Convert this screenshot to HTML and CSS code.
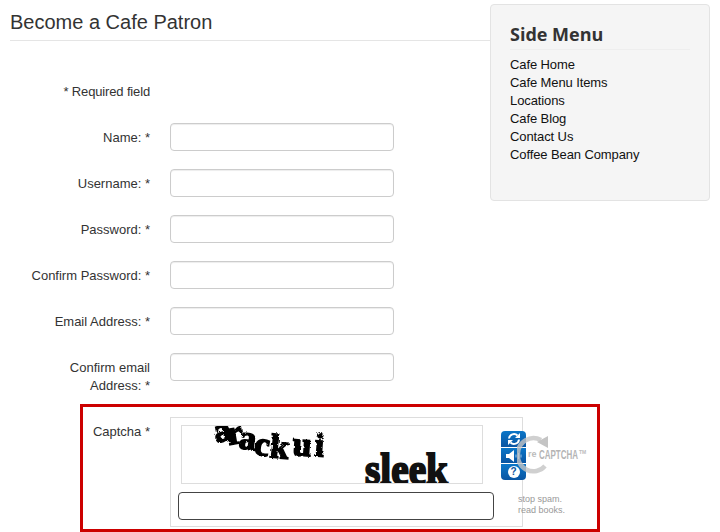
FILE: index.html
```html
<!DOCTYPE html>
<html lang="en">
<head>
    <meta charset="UTF-8">
    <meta name="viewport" content="width=device-width, initial-scale=1.0">
    <title>Become a Cafe Patron</title>
    <link rel="stylesheet" href="styles.css">
</head>
<body>
    <div class="page">
        <main class="main">
            <h1 class="page-title">Become a Cafe Patron</h1>
            <form class="signup">
                <p class="required-note">* Required field</p>
                <div class="row">
                    <label class="row-label">Name: *</label>
                    <input class="field" type="text">
                </div>
                <div class="row">
                    <label class="row-label">Username: *</label>
                    <input class="field" type="text">
                </div>
                <div class="row">
                    <label class="row-label">Password: *</label>
                    <input class="field" type="password">
                </div>
                <div class="row">
                    <label class="row-label">Confirm Password: *</label>
                    <input class="field" type="password">
                </div>
                <div class="row">
                    <label class="row-label">Email Address: *</label>
                    <input class="field" type="text">
                </div>
                <div class="row row-tall">
                    <label class="row-label">Confirm email Address: *</label>
                    <input class="field" type="text">
                </div>
                <div class="captcha-row">
                    <label class="row-label captcha-label">Captcha *</label>
                    <div class="captcha">
                        <div class="captcha-top">
                            <div class="captcha-image">
                                <svg width="300" height="57" viewBox="0 0 300 57">
                                    <defs>
                                        <filter id="rough" x="-5%" y="-5%" width="110%" height="110%">
                                            <feTurbulence type="fractalNoise" baseFrequency="0.3" numOctaves="2" seed="4"/>
                                            <feDisplacementMap in="SourceGraphic" scale="3"/>
                                        </filter>
                                    </defs>
                                    <text class="word-one" filter="url(#rough)" x="34 47 56 71 87 110 132" y="17 19 22 28 31 29 30" rotate="-12 -10 8 10 6 4 4">arackui</text>
                                    <text class="word-two" x="183" y="58" textLength="83" lengthAdjust="spacingAndGlyphs">sleek</text>
                                </svg>
                            </div>
                            <div class="captcha-buttons">
                                <a class="captcha-button">
                                    <svg width="14" height="14" viewBox="0 0 14 14" fill="none" stroke="#fff" stroke-width="2">
                                        <path d="M2 6.500a5 5 0 0 1 8.500-3"/>
                                        <path d="M12 7.500a5 5 0 0 1-8.500 3"/>
                                        <path d="M13 1v5H8z" fill="#fff" stroke="none"/>
                                        <path d="M1 13V8h5z" fill="#fff" stroke="none"/>
                                    </svg>
                                </a>
                                <a class="captcha-button">
                                    <svg width="18" height="14" viewBox="0 0 18 14">
                                        <path d="M1 5h3l5-4v12l-5-4H1z" fill="#fff"/>
                                        <path d="M11 5.500v3M13.500 4v6M16 5.500v3" stroke="#9cc4e6" fill="none"/>
                                    </svg>
                                </a>
                                <a class="captcha-button">
                                    <span class="help-icon">?</span>
                                </a>
                            </div>
                        </div>
                        <div class="captcha-bottom">
                            <input class="captcha-input" type="text">
                            <p class="captcha-tagline">stop spam.<br>read books.</p>
                        </div>
                        <svg class="captcha-logo" width="72" height="48" viewBox="0 0 72 48">
                            <path d="M24 13A15.500 15.500 0 0 0 1 26.500A15.500 15.500 0 0 0 28 39" fill="none" stroke="#c4c4c4" stroke-width="4.500" opacity="0.8"/>
                            <path d="M31 9v12l-11-6z" fill="#c4c4c4"/>
                            <rect x="10" y="21" width="60" height="12" fill="#fff"/>
                            <text class="logo-re" x="11" y="30">re</text>
                            <text class="logo-word" x="22" y="32" textLength="39" lengthAdjust="spacingAndGlyphs">CAPTCHA</text>
                            <text class="logo-tm" x="62" y="27">TM</text>
                        </svg>
                    </div>
                </div>
            </form>
        </main>
        <aside class="side-menu">
            <h2 class="side-title">Side Menu</h2>
            <ul class="side-links">
                <li><a href="#">Cafe Home</a></li>
                <li><a href="#">Cafe Menu Items</a></li>
                <li><a href="#">Locations</a></li>
                <li><a href="#">Cafe Blog</a></li>
                <li><a href="#">Contact Us</a></li>
                <li><a href="#">Coffee Bean Company</a></li>
            </ul>
        </aside>
    </div>
</body>
</html>
```

FILE: styles.css
```css
html, body {
    margin: 0;
    padding: 0;
    height: 532px;
    overflow: hidden;
    background: #fff;
    color: #333;
    font-family: "Liberation Sans", Arial, sans-serif;
    font-size: 13px;
    line-height: 18px;
}

p, h1, h2, ul {
    margin: 0;
    padding: 0;
}

.page {
    display: flex;
    align-items: flex-start;
    padding-left: 10px;
}

.main {
    flex: 0 0 480px;
    width: 480px;
}

.page-title {
    height: 40px;
    font-size: 20px;
    font-weight: normal;
    line-height: 44px;
    border-bottom: 1px solid #e5e5e5;
}

.required-note {
    width: 140px;
    margin: 42px 0 22px;
    letter-spacing: -0.15px;
    text-align: right;
}

.row {
    display: grid;
    grid-template-columns: 140px 224px;
    column-gap: 20px;
    margin-bottom: 18px;
}

.row-tall {
    margin-bottom: 9px;
}

.row-label {
    padding: 6px 0 0 20px;
    text-align: right;
}

.field {
    box-sizing: border-box;
    width: 224px;
    height: 28px;
    margin: 0;
    background: #fff;
    border: 1px solid #ccc;
    border-radius: 4px;
    box-shadow: inset 0 1px 1px rgba(0, 0, 0, 0.075);
}

.captcha-row {
    display: flex;
    gap: 20px;
    box-sizing: border-box;
    width: 520px;
    height: 128px;
    margin-left: 70px;
    padding-top: 10px;
    border: 3px solid #c00;
}

.captcha-label {
    flex: 0 0 67px;
    box-sizing: border-box;
    padding-left: 0;
}

.captcha {
    position: relative;
    box-sizing: border-box;
    width: 353px;
    height: 110px;
    border: 1px solid #ddd;
}

.captcha-top {
    display: flex;
    align-items: flex-start;
    gap: 18px;
    margin: 7px 0 0 10px;
}

.captcha-image {
    flex: none;
    width: 300px;
    height: 57px;
    overflow: hidden;
    border: 1px solid #ddd;
}

.captcha-image svg {
    display: block;
}

.word-one {
    font-family: "Liberation Serif", serif;
    font-size: 34px;
    font-weight: bold;
    fill: #000;
    stroke: #000;
    stroke-width: 1.6px;
}

.word-two {
    font-family: "Liberation Serif", serif;
    font-size: 44px;
    font-weight: bold;
    fill: #111;
    stroke: #111;
    stroke-width: 2px;
}

.captcha-buttons {
    flex: none;
    display: flex;
    flex-direction: column;
    gap: 1px;
    width: 25px;
    height: 49px;
    margin-top: 6px;
    overflow: hidden;
    border-radius: 4px;
}

.captcha-button {
    flex: 1;
    display: flex;
    align-items: center;
    justify-content: center;
    background: linear-gradient(#0b76c8, #0a55a2);
}

.help-icon {
    width: 12px;
    height: 12px;
    border-radius: 50%;
    background: #fff;
    color: #0a559f;
    font-size: 10px;
    font-weight: bold;
    line-height: 12px;
    text-align: center;
}

.captcha-bottom {
    display: flex;
    gap: 24px;
    margin: 8px 0 0 7px;
}

.captcha-input {
    flex: none;
    box-sizing: border-box;
    width: 316px;
    height: 28px;
    margin: 0;
    background: #fff;
    border: 1px solid #444;
    border-radius: 4px;
}

.captcha-tagline {
    flex: none;
    margin-top: 2px;
    color: #999;
    font-size: 9px;
    line-height: 11px;
    white-space: nowrap;
}

.captcha-logo {
    position: absolute;
    top: 9px;
    left: 346px;
}

.logo-re {
    font-size: 9px;
    font-weight: bold;
    fill: #bbb;
}

.logo-word {
    font-size: 13px;
    font-weight: bold;
    fill: #b4b4b4;
}

.logo-tm {
    font-size: 5px;
    font-weight: bold;
    fill: #bbb;
}

.side-menu {
    flex: 0 0 220px;
    box-sizing: border-box;
    width: 220px;
    height: 197px;
    margin-top: 4px;
    padding: 19px 19px 0;
    background: #f5f5f5;
    border: 1px solid #e3e3e3;
    border-radius: 4px;
}

.side-title {
    height: 25px;
    font-family: "Open Sans", sans-serif;
    font-size: 18px;
    font-weight: 700;
    line-height: 20px;
    border-bottom: 1px solid #eee;
    margin-bottom: 6px;
}

.side-links {
    list-style: none;
    letter-spacing: -0.1px;
}

.side-links a {
    color: #111;
    text-decoration: none;
}
```
